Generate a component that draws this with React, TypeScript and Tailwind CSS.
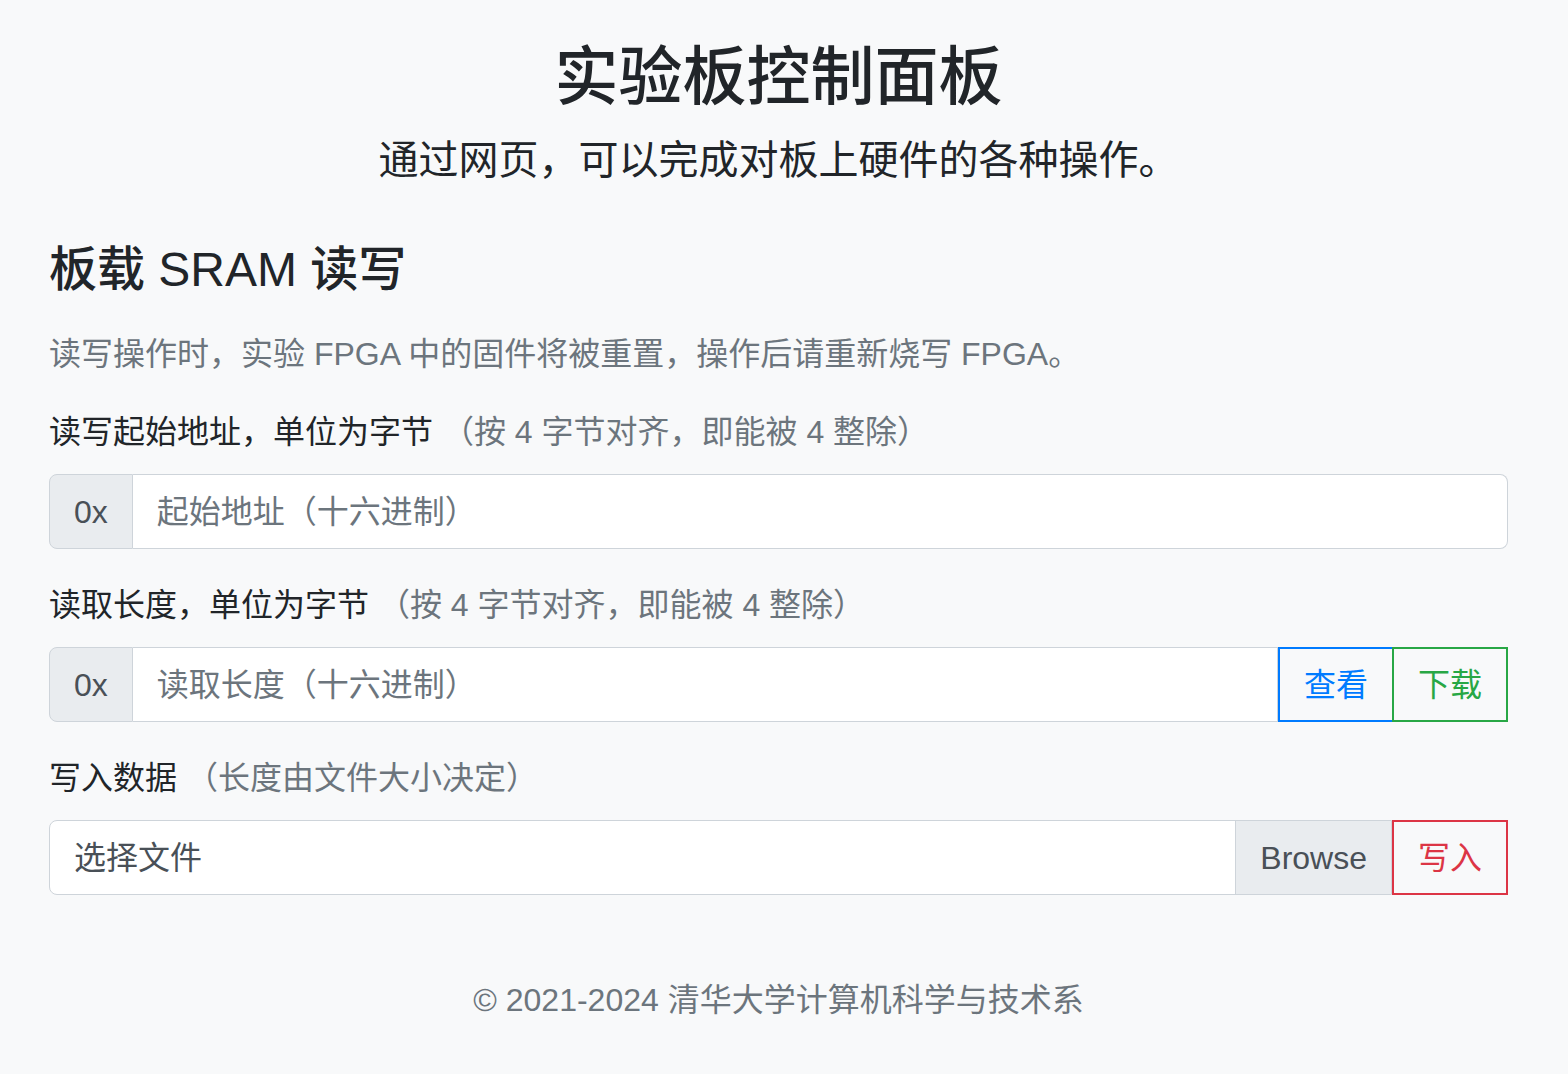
import { useState } from "react";

const muted = "text-[#6c757d]";

function Label({ main, hint }: { main: string; hint: string }) {
  return (
    <label className="block text-[32px] leading-[48px] mb-[18px] text-[#212529]">
      {main} <span className={muted}>{hint}</span>
    </label>
  );
}

function HexInput({ placeholder, children }: { placeholder: string; children?: React.ReactNode }) {
  const [value, setValue] = useState("");
  return (
    <div className="flex h-[75px] mb-[32px]">
      <span className="flex items-center px-6 bg-[#e9ecef] border border-[#ced4da] rounded-l-[8px] text-[#495057] text-[32px]">
        0x
      </span>
      <input
        value={value}
        onChange={(e) => setValue(e.target.value)}
        placeholder={placeholder}
        className={
          "flex-1 min-w-0 bg-white border border-l-0 border-[#ced4da] px-6 text-[32px] text-[#495057] placeholder:text-[#6c757d] outline-none " +
          (children ? "" : "rounded-r-[8px]")
        }
      />
      {children}
    </div>
  );
}

export default function App() {
  const [file, setFile] = useState("");

  return (
    <div className="min-h-screen bg-[#f8f9fa] font-['Liberation_Sans','Noto_Sans_CJK_SC',sans-serif] text-[#212529] pt-[39px] pl-[49px] pr-[60px] pb-10">
      <h1 className="text-center text-[64px] leading-[1.2] font-medium">实验板控制面板</h1>
      <p className="text-center text-[40px] leading-[60px] mt-[14px]">
        通过网页，可以完成对板上硬件的各种操作。
      </p>

      <h4 className="text-[48px] leading-[1.2] font-medium mt-[51px]">板载 SRAM 读写</h4>
      <p className={"text-[32px] leading-[48px] mt-[32px] mb-[30px] " + muted}>
        读写操作时，实验 FPGA 中的固件将被重置，操作后请重新烧写 FPGA。
      </p>

      <Label main="读写起始地址，单位为字节" hint="（按 4 字节对齐，即能被 4 整除）" />
      <HexInput placeholder="起始地址（十六进制）" />

      <Label main="读取长度，单位为字节" hint="（按 4 字节对齐，即能被 4 整除）" />
      <HexInput placeholder="读取长度（十六进制）">
        <button className="px-6 border-2 border-[#007bff] text-[#007bff] text-[32px] hover:bg-[#007bff] hover:text-white">
          查看
        </button>
        <button className="-ml-[2px] px-6 border-2 border-[#28a745] text-[#28a745] text-[32px] hover:bg-[#28a745] hover:text-white">
          下载
        </button>
      </HexInput>

      <Label main="写入数据" hint="（长度由文件大小决定）" />
      <div className="flex h-[75px]">
        <label className="flex-1 flex items-stretch border border-[#ced4da] rounded-l-[8px] bg-white cursor-pointer overflow-hidden">
          <input
            type="file"
            className="hidden"
            onChange={(e) => setFile(e.target.files?.[0]?.name ?? "")}
          />
          <span className="flex-1 flex items-center px-6 text-[32px] text-[#495057]">
            {file || "选择文件"}
          </span>
          <span className="flex items-center px-6 bg-[#e9ecef] border-l border-[#ced4da] text-[32px] text-[#495057]">
            Browse
          </span>
        </label>
        <button className="w-[116px] border-2 border-[#dc3545] text-[#dc3545] text-[32px] hover:bg-[#dc3545] hover:text-white">
          写入
        </button>
      </div>

      <footer className={"text-center text-[32px] leading-[48px] mt-[81px] " + muted}>
        © 2021-2024 清华大学计算机科学与技术系
      </footer>
    </div>
  );
}
